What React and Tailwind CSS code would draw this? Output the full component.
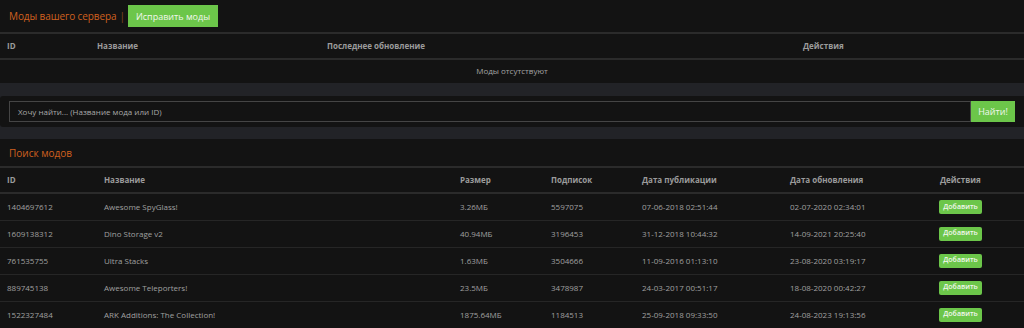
import React from "react";

const mods = [
  ["1404697612", "Awesome SpyGlass!", "3.26МБ", "5597075", "07-06-2018 02:51:44", "02-07-2020 02:34:01"],
  ["1609138312", "Dino Storage v2", "40.94МБ", "3196453", "31-12-2018 10:44:32", "14-09-2021 20:25:40"],
  ["761535755", "Ultra Stacks", "1.63МБ", "3504666", "11-09-2016 01:13:10", "23-08-2020 03:19:17"],
  ["889745138", "Awesome Teleporters!", "23.5МБ", "3478987", "24-03-2017 00:51:17", "18-08-2020 00:42:27"],
  ["1522327484", "ARK Additions: The Collection!", "1875.64МБ", "1184513", "25-09-2018 09:33:50", "24-08-2023 19:13:56"],
];

export default function App() {
  return (
    <div
      className="w-[1024px] h-[328px] overflow-hidden bg-[#222327] text-[#a3a3a3]"
      style={{ fontFamily: '"Open Sans", "Noto Sans", sans-serif' }}
    >
      {/* Panel 1 */}
      <div className="bg-[#131313] h-[83px]">
        <div className="flex items-center h-[32px] pl-[9px]">
          <span className="text-[10px] tracking-[-0.1px] text-[#d0601f]">Моды вашего сервера</span>
          <span className="text-[10px] text-[#8a4a20] ml-[3px] mr-[3px]">|</span>
          <button className="h-[22px] px-[8px] bg-[#6cc64a] text-[#f2f7ee] text-[9px] leading-none">
            Исправить моды
          </button>
        </div>
        <table className="w-full border-collapse table-fixed">
          <colgroup>
            <col className="w-[90px]" />
            <col className="w-[230px]" />
            <col className="w-[476px]" />
            <col />
          </colgroup>
          <thead>
            <tr className="h-[26px] border-t-2 border-b-2 border-[#2b2b2b] text-[8px] font-bold text-[#9b9b9b] text-left">
              <th className="pl-[7px]">ID</th>
              <th className="pl-[7px]">Название</th>
              <th className="pl-[7px]">Последнее обновление</th>
              <th className="pl-[7px]">Действия</th>
            </tr>
          </thead>
          <tbody>
            <tr className="h-[22px] text-[8px]">
              <td colSpan={4} className="text-center">
                Моды отсутствуют
              </td>
            </tr>
          </tbody>
        </table>
      </div>

      {/* Search */}
      <div className="mt-[13px] bg-[#131313] rounded-l-[3px] h-[31px] flex items-center pl-[9px] pr-[9px]">
        <div className="flex-1 h-[21px] border border-[#454545] flex items-center pl-[8px] text-[8px] text-[#a8a8a8]">
          Хочу найти... (Название мода или ID)
        </div>
        <button className="h-[21px] w-[44px] bg-[#6cc64a] text-[#f2f7ee] text-[9px] font-medium leading-none">
          Найти!
        </button>
      </div>

      {/* Panel 3 */}
      <div className="mt-[12px] bg-[#131313] h-[200px]">
        <div className="h-[27px] flex items-center pl-[9px] pt-[2px]">
          <span className="text-[10px] text-[#d0601f]">Поиск модов</span>
        </div>
        <table className="w-full border-collapse table-fixed">
          <colgroup>
            <col className="w-[97px]" />
            <col className="w-[356px]" />
            <col className="w-[91px]" />
            <col className="w-[91px]" />
            <col className="w-[148px]" />
            <col className="w-[150px]" />
            <col />
          </colgroup>
          <thead>
            <tr className="h-[26px] border-t-2 border-b-2 border-[#2b2b2b] text-[8px] font-bold text-[#9b9b9b] text-left">
              <th className="pl-[7px]">ID</th>
              <th className="pl-[7px]">Название</th>
              <th className="pl-[7px]">Размер</th>
              <th className="pl-[7px]">Подписок</th>
              <th className="pl-[7px]">Дата публикации</th>
              <th className="pl-[7px]">Дата обновления</th>
              <th className="pl-[7px]">Действия</th>
            </tr>
          </thead>
          <tbody>
            {mods.map((m) => (
              <tr key={m[0]} className="h-[27px] border-b border-[#262626] text-[8px] text-[#a0a0a0]">
                {m.map((c, i) => (
                  <td key={i} className="pl-[7px]">
                    {c}
                  </td>
                ))}
                <td className="pl-[6px]">
                  <span className="inline-flex items-center justify-center h-[14px] w-[43px] rounded-[2px] bg-[#6cc64a] text-[#f2f7ee] text-[7px] font-semibold">
                    Добавить
                  </span>
                </td>
              </tr>
            ))}
          </tbody>
        </table>
      </div>
    </div>
  );
}
